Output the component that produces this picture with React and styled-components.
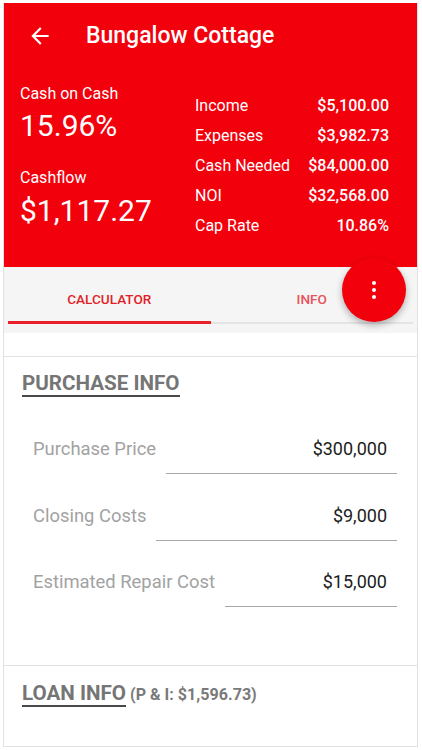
import React from "react";
import styled, { createGlobalStyle } from "styled-components";

const RED = "#f2000c";

const Global = createGlobalStyle`
  html, body { margin: 0; padding: 0; background: #ffffff; }
  body { font-family: Roboto, "Noto Sans", Arial, sans-serif; -webkit-font-smoothing: antialiased; }
  * { box-sizing: border-box; }
`;

const Frame = styled.div`
  position: relative;
  margin: 3px 4px 0 3px;
  height: 744px;
  border: 1px solid #e2e2e2;
  border-top: none;
  overflow: hidden;
  background: #ffffff;
`;

const Header = styled.header`
  background: ${RED};
  height: 264px;
  color: #ffffff;
`;

const Toolbar = styled.div`
  height: 66px;
  display: flex;
  align-items: center;
  padding-left: 23px;
`;

const BackButton = styled.button`
  width: 26px;
  height: 26px;
  padding: 0;
  border: none;
  background: none;
  color: #ffffff;
  display: flex;
  margin-right: 33px;
  svg { width: 26px; height: 26px; fill: currentColor; }
`;

const Title = styled.h1`
  margin: 0;
  font-size: 23px;
  font-weight: 500;
  line-height: 28px;
`;

const Stats = styled.div`
  display: flex;
  justify-content: space-between;
  padding: 0 28px 0 16px;
`;

const LeftCol = styled.div`
  padding-top: 15.5px;
  display: flex;
  flex-direction: column;
`;

const StatLabel = styled.div`
  font-size: 16px;
  line-height: 18px;
  margin-top: ${(p) => p.$gap || 0}px;
`;

const StatBig = styled.div`
  font-size: 30px;
  line-height: 36px;
  margin-top: ${(p) => p.$gap || 0}px;
`;

const RightCol = styled.div`
  width: 194px;
  padding-top: 22px;
`;

const MetricRow = styled.div`
  display: flex;
  justify-content: space-between;
  font-size: 16px;
  line-height: 30px;
`;

const MetricValue = styled.span`
  font-weight: 500;
`;

const TabBar = styled.div`
  background: #f5f5f5;
  height: 66px;
  padding: 0 4px 9px;
  display: flex;
  align-items: flex-end;
`;

const Tab = styled.div`
  flex: 1;
  height: ${(p) => (p.$active ? 57 : 56)}px;
  display: flex;
  align-items: flex-end;
  justify-content: center;
  padding-bottom: ${(p) => (p.$active ? 12 : 13)}px;
  border-bottom: ${(p) => (p.$active ? `3px solid #e8212b` : `2px solid #e4e4e4`)};
  font-size: 13.6px;
  font-weight: 500;
  line-height: 20px;
  color: ${(p) => (p.$active ? "#e01f29" : "#e9525b")};
`;

const Fab = styled.button`
  position: absolute;
  left: 338px;
  top: 255px;
  width: 64px;
  height: 64px;
  border-radius: 50%;
  border: none;
  background: ${RED};
  box-shadow: 0 3px 7px rgba(0, 0, 0, 0.3);
  display: flex;
  flex-direction: column;
  align-items: center;
  justify-content: center;
  gap: 3px;
  padding: 0;
`;

const Dot = styled.span`
  width: 4px;
  height: 4px;
  border-radius: 50%;
  background: #ffffff;
`;

const Spacer = styled.div`
  height: 24px;
  border-bottom: 1px solid #e3e3e3;
`;

const Section = styled.section`
  padding: ${(p) => p.$pt}px 20px ${(p) => p.$pb}px 18px;
  border-bottom: ${(p) => (p.$divider ? "1px solid #e3e3e3" : "none")};
`;

const HeadingRow = styled.div`
  display: flex;
  align-items: baseline;
`;

const Heading = styled.h2`
  display: inline-block;
  margin: 0;
  font-size: 20.6px;
  font-weight: 700;
  line-height: 24px;
  color: #757575;
  border-bottom: 2px solid #4a4a4a;
`;

const HeadingNote = styled.span`
  margin-left: 4px;
  font-size: 16.1px;
  font-weight: 700;
  color: #7a7a7a;
`;

const Fields = styled.div`
  padding: 40px 0 0 11px;
  display: flex;
  flex-direction: column;
  gap: 29.7px;
`;

const Field = styled.div`
  display: flex;
  align-items: baseline;
`;

const FieldLabel = styled.label`
  font-size: 18.4px;
  line-height: 24px;
  color: #a2a2a2;
  white-space: nowrap;
`;

const FieldInput = styled.div`
  flex: 1;
  margin-left: 10px;
  padding: 0 10px 12px 0;
  border-bottom: 1.5px solid #a8a8a8;
  text-align: right;
  font-size: 18px;
  line-height: 24px;
  color: #1c1c1c;
`;

const metrics = [
  ["Income", "$5,100.00"],
  ["Expenses", "$3,982.73"],
  ["Cash Needed", "$84,000.00"],
  ["NOI", "$32,568.00"],
  ["Cap Rate", "10.86%"],
];

const fields = [
  ["Purchase Price", "$300,000"],
  ["Closing Costs", "$9,000"],
  ["Estimated Repair Cost", "$15,000"],
];

export default function App() {
  return (
    <>
      <Global />
      <Frame>
        <Header>
          <Toolbar>
            <BackButton aria-label="Back">
              <svg viewBox="0 0 24 24">
                <path d="M20 11H7.83l5.59-5.59L12 4l-8 8 8 8 1.41-1.41L7.83 13H20v-2z" />
              </svg>
            </BackButton>
            <Title>Bungalow Cottage</Title>
          </Toolbar>
          <Stats>
            <LeftCol>
              <StatLabel>Cash on Cash</StatLabel>
              <StatBig $gap={5.5}>15.96%</StatBig>
              <StatLabel $gap={24.5}>Cashflow</StatLabel>
              <StatBig $gap={6.5}>$1,117.27</StatBig>
            </LeftCol>
            <RightCol>
              {metrics.map(([k, v]) => (
                <MetricRow key={k}>
                  <span>{k}</span>
                  <MetricValue>{v}</MetricValue>
                </MetricRow>
              ))}
            </RightCol>
          </Stats>
        </Header>
        <TabBar>
          <Tab $active>CALCULATOR</Tab>
          <Tab>INFO</Tab>
        </TabBar>
        <Fab aria-label="More">
          <Dot />
          <Dot />
          <Dot />
        </Fab>
        <Spacer />
        <Section $pt={14} $pb={58} $divider>
          <HeadingRow>
            <Heading>PURCHASE INFO</Heading>
          </HeadingRow>
          <Fields>
            {fields.map(([k, v]) => (
              <Field key={k}>
                <FieldLabel>{k}</FieldLabel>
                <FieldInput>{v}</FieldInput>
              </Field>
            ))}
          </Fields>
        </Section>
        <Section $pt={15} $pb={0}>
          <HeadingRow>
            <Heading>LOAN INFO</Heading>
            <HeadingNote>(P &amp; I: $1,596.73)</HeadingNote>
          </HeadingRow>
        </Section>
      </Frame>
    </>
  );
}
